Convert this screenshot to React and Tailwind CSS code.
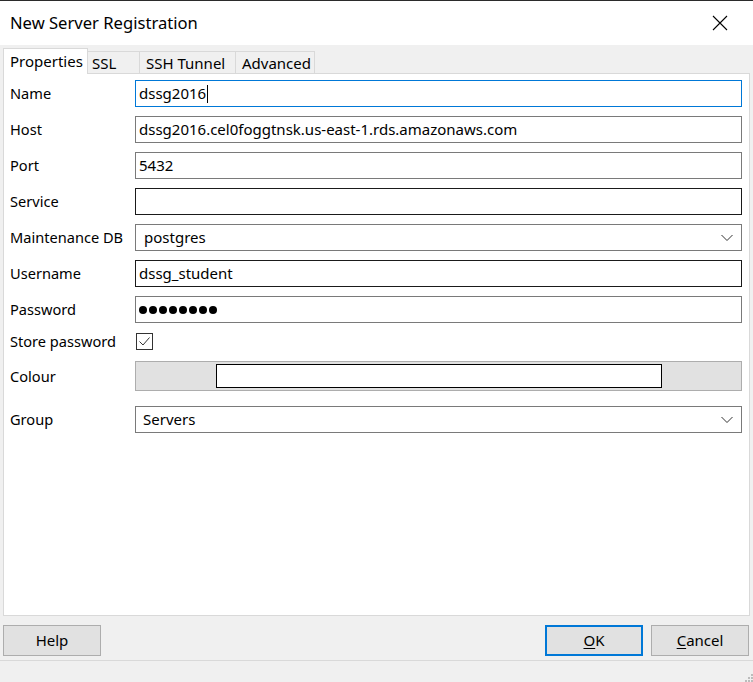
import React from "react";

const font = { fontFamily: '"Noto Sans", "Open Sans", sans-serif' };

function Chevron() {
  return (
    <svg width="12" height="8" viewBox="0 0 12 8" className="absolute right-[8px] top-1/2 -translate-y-1/2">
      <path d="M0.5 1 L6 6.5 L11.5 1" fill="none" stroke="#333" strokeWidth="1" />
    </svg>
  );
}

function Row({ label, children, className = "" }) {
  return (
    <div className={"flex items-center " + className}>
      <div className="w-[131px] shrink-0 pl-[6px] text-[14.6px] text-black leading-none">{label}</div>
      <div className="flex-1 min-w-0">{children}</div>
    </div>
  );
}

function Input({ value, border = "border-[#7a7a7a]", children }) {
  return (
    <div className={"relative h-[27px] border bg-white flex items-center pl-[3px] text-[15px] text-black " + border}>
      {value}
      {children}
    </div>
  );
}

const dots = [0, 1, 2, 3, 4, 5, 6, 7];

export default function App() {
  return (
    <div className="w-[753px] h-[682px] bg-[#f0f0f0] flex flex-col overflow-hidden select-none" style={font}>
      {/* title bar */}
      <div className="h-[45px] bg-white border-t border-[#2b2b2b] flex items-center justify-between shrink-0">
        <div className="pl-[10px] text-[16.6px] text-black">New Server Registration</div>
        <div className="w-[46px] h-[44px] mr-[10px] flex items-center justify-center">
          <svg width="16" height="16" viewBox="0 0 16 16">
            <path d="M1 1 L15 15 M15 1 L1 15" stroke="#000" strokeWidth="1.1" />
          </svg>
        </div>
      </div>

      {/* tabs */}
      <div className="h-[28px] flex items-end pl-[3px] shrink-0">
        <div className="relative z-10 h-[26px] w-[85px] -mb-[1px] pl-[6px] bg-white border border-b-0 border-[#d9d9d9] text-[15px] flex items-start pt-[1px] leading-[22px]">
          Properties
        </div>
        <div className="h-[22px] w-[52px] border border-l-0 border-b-0 border-[#d9d9d9] text-[15px] pl-[4px] leading-[22px]">SSL</div>
        <div className="h-[22px] w-[96px] border border-l-0 border-b-0 border-[#d9d9d9] text-[15px] pl-[6px] leading-[22px]">SSH Tunnel</div>
        <div className="h-[22px] w-[79px] border border-l-0 border-b-0 border-[#d9d9d9] text-[15px] pl-[6px] leading-[22px]">Advanced</div>
      </div>

      {/* panel */}
      <div className="mx-[3px] h-[543px] shrink-0 bg-white border border-[#d9d9d9] pr-[7px] pt-[6px] flex flex-col">
        <Row label="Name">
          <Input value="dssg2016" border="border-[#0078d7]">
            <span className="inline-block w-[1px] h-[18px] bg-black ml-[1px]" />
          </Input>
        </Row>
        <Row label="Host" className="mt-[9px]">
          <Input value="dssg2016.cel0foggtnsk.us-east-1.rds.amazonaws.com" />
        </Row>
        <Row label="Port" className="mt-[9px]">
          <Input value="5432" />
        </Row>
        <Row label="Service" className="mt-[9px]">
          <Input value="" border="border-[#1a1a1a]" />
        </Row>
        <Row label="Maintenance DB" className="mt-[9px]">
          <Input value={<span className="pl-[5px]">postgres</span>}>
            <Chevron />
          </Input>
        </Row>
        <Row label="Username" className="mt-[9px]">
          <Input value="dssg_student" border="border-[#1a1a1a]" />
        </Row>
        <Row label="Password" className="mt-[9px]">
          <Input
            value={
              <span className="flex items-center gap-[2px]">
                {dots.map((d) => (
                  <span key={d} className="block w-[8px] h-[8px] rounded-full bg-black" />
                ))}
              </span>
            }
          />
        </Row>
        <Row label="Store password" className="mt-[8px] h-[21px]">
          <div className="w-[17px] h-[17px] ml-[1px] border border-[#333] bg-white flex items-center justify-center">
            <svg width="13" height="11" viewBox="0 0 13 11">
              <path d="M1.5 5.5 L5 9 L11.5 1.5" fill="none" stroke="#333" strokeWidth="1" />
            </svg>
          </div>
        </Row>
        <Row label="Colour" className="mt-[9px]">
          <div className="h-[30px] border border-[#adadad] bg-[#e1e1e1] flex items-center pl-[80px] pr-[79px]">
            <div className="h-[24px] flex-1 bg-white border border-black" />
          </div>
        </Row>
        <Row label="Group" className="mt-[15px]">
          <Input value={<span className="pl-[4px]">Servers</span>}>
            <Chevron />
          </Input>
        </Row>
      </div>

      {/* buttons */}
      <div className="h-[40px] shrink-0 flex items-start pt-[9px] pl-[3px] pr-[4px]">
        <div className="w-[98px] h-[31px] bg-[#e1e1e1] border border-[#adadad] flex items-center justify-center text-[15px]">Help</div>
        <div className="flex-1" />
        <div className="w-[98px] h-[31px] bg-[#e1e1e1] border-2 border-[#0078d7] flex items-center justify-center text-[15px]"><span><u className="underline-offset-2">O</u>K</span></div>
        <div className="w-[98px] h-[31px] ml-[8px] bg-[#e1e1e1] border border-[#adadad] flex items-center justify-center text-[15px]"><span><u className="underline-offset-2">C</u>ancel</span></div>
      </div>
      <div className="h-[1px] bg-[#d9d9d9] mt-[4px] shrink-0" />
      <div className="flex-1 relative">
        <svg width="8" height="8" viewBox="0 0 8 8" className="absolute right-[0px] bottom-[0px]">
          <rect x="6" y="0" width="2" height="2" fill="#bcbcbc" />
          <rect x="3" y="3" width="2" height="2" fill="#bcbcbc" />
          <rect x="6" y="3" width="2" height="2" fill="#bcbcbc" />
          <rect x="0" y="6" width="2" height="2" fill="#bcbcbc" />
          <rect x="3" y="6" width="2" height="2" fill="#bcbcbc" />
          <rect x="6" y="6" width="2" height="2" fill="#bcbcbc" />
        </svg>
      </div>
    </div>
  );
}
